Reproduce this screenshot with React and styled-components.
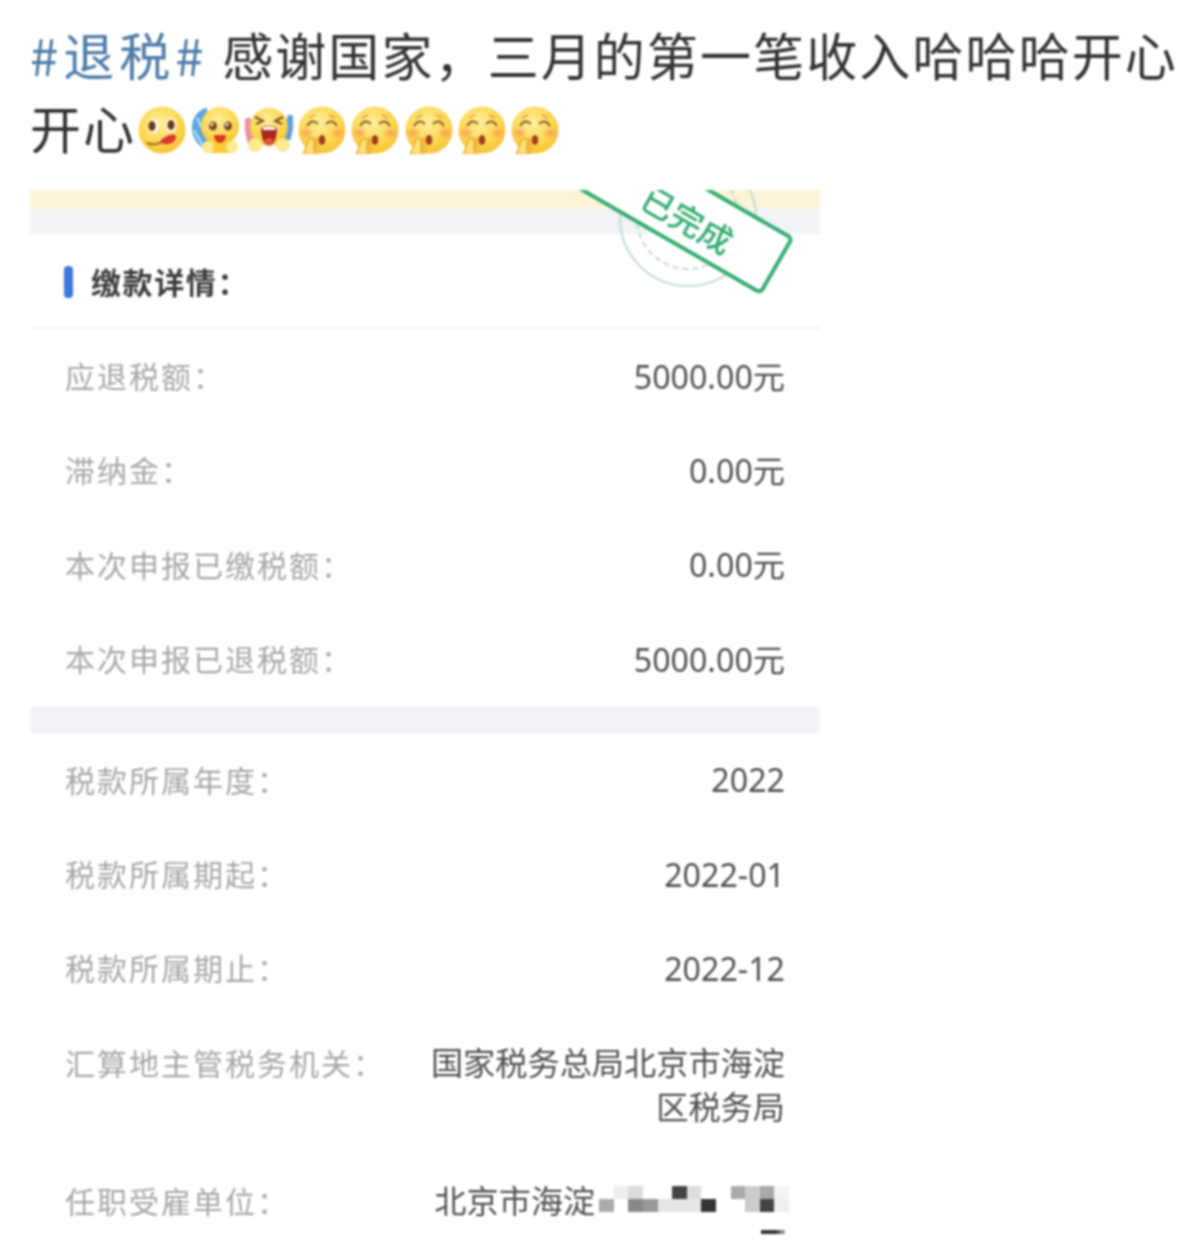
import React from "react";
import styled, { createGlobalStyle } from "styled-components";

const Global = createGlobalStyle`
  html, body { margin: 0; padding: 0; background: #fff; height: 1245px; overflow: hidden; }
`;

const Page = styled.div`
  width: 1200px;
  height: 1245px;
  overflow: hidden;
  background: #fff;
  font-family: "Noto Sans CJK SC", "Noto Sans", sans-serif;
  filter: blur(0.8px);
`;

const Headline = styled.div`
  padding: 18px 0 0 30px;
  font-size: 51px;
  line-height: 72.5px;
  letter-spacing: 2.1px;
  color: #333;
  margin-bottom: 27px;
`;

const Tag = styled.span`
  color: #4d7ca8;
  letter-spacing: 5px;
`;

const EmojiRow = styled.span`
  display: inline-flex;
  gap: 5.3px;
  vertical-align: -5px;
  margin-left: 2px;
`;

const Card = styled.div`
  position: relative;
  width: 790px;
  margin-left: 30px;
  overflow: hidden;
`;

const YellowBand = styled.div`
  height: 18px;
  background: #fbf4d6;
`;

const GrayBand = styled.div`
  height: ${(p) => p.$h}px;
  background: #f2f3f6;
`;

const SectionHeader = styled.div`
  height: 95px;
  box-sizing: border-box;
  border-bottom: 2px solid #f1f2f4;
  display: flex;
  align-items: center;
  gap: 18px;
  padding: 0 0 0 34px;
`;

const Bar = styled.span`
  width: 9px;
  height: 32px;
  border-radius: 4px;
  background: #3d78dc;
  margin-top: 2px;
`;

const SectionTitle = styled.span`
  font-size: 30px;
  font-weight: 700;
  letter-spacing: 1.6px;
  color: #3c3c3c;
`;

const Row = styled.div`
  display: flex;
  justify-content: space-between;
  align-items: flex-start;
  padding: ${(p) => (p.$multi ? "25px 35px 25px" : "25px 35px 27px")};
  font-size: 30px;
  line-height: 42.4px;
`;

const Label = styled.span`
  color: #a6a6a6;
  letter-spacing: 2px;
  font-weight: 400;
  white-space: nowrap;
`;

const Value = styled.span`
  color: #505050;
  max-width: 358px;
  text-align: right;
  font-family: "Noto Sans", "Noto Sans CJK SC", sans-serif;
  font-size: 32.2px;
  font-weight: 400;
  line-height: ${(p) => (p.$multi ? "44px" : "42.4px")};
  padding-top: ${(p) => (p.$multi ? "0" : "1.5px")};
  margin-bottom: ${(p) => (p.$multi ? "0" : "-1.5px")};
`;

const Mosaic = styled.span`
  display: inline-grid;
  grid-template-columns: repeat(13, 14.6px);
  grid-auto-rows: 13px;
  vertical-align: 14px;
  margin-left: 4px;
  margin-right: -4px;
`;

const Tile = styled.span`
  background: ${(p) => p.$c};
`;

const Scrap = styled.span`
  display: inline-block;
  width: 24px;
  height: 4px;
  background: linear-gradient(90deg, #333 60%, #aaa);
  vertical-align: 23px;
`;

const Ring = styled.div`
  position: absolute;
  left: 589px;
  top: -41px;
  width: 138px;
  height: 138px;
  box-sizing: border-box;
  border: 2px solid #bfdccf;
  border-radius: 50%;
  display: flex;
  align-items: center;
  justify-content: center;
`;

const InnerRing = styled.div`
  width: 104px;
  height: 104px;
  box-sizing: border-box;
  border: 2px dashed #c2dace;
  border-radius: 50%;
`;

const Stamp = styled.div`
  position: absolute;
  left: 524px;
  top: -17px;
  width: 240px;
  height: 67px;
  box-sizing: border-box;
  background: #fff;
  border: 4px solid #35ad72;
  border-radius: 6px;
  transform: rotate(30deg);
  display: flex;
  align-items: center;
  justify-content: center;
  padding: 8px 0 0 36px;
  color: #35ad72;
  font-size: 33px;
  font-weight: 500;
  line-height: 1;
  white-space: nowrap;
`;

const Face = ({ id, children, c1 = "#fff09a", c2 = "#f6bd2c" }) => (
  <>
    <defs>
      <radialGradient id={id} cx="45%" cy="35%" r="70%">
        <stop offset="0%" stopColor={c1} />
        <stop offset="65%" stopColor="#fbd54e" />
        <stop offset="100%" stopColor={c2} />
      </radialGradient>
    </defs>
    {children}
  </>
);

const Tongue = () => (
  <svg width="48" height="48" viewBox="0 0 48 48">
    <Face id="f1">
      <circle cx="24" cy="24" r="23.5" fill="url(#f1)" />
      <ellipse cx="15" cy="20" rx="5.4" ry="7" fill="#fff" />
      <ellipse cx="33" cy="19" rx="5.4" ry="7" fill="#fff" />
      <ellipse cx="14" cy="20" rx="3.6" ry="5" fill="#6b3a1c" />
      <ellipse cx="33" cy="19" rx="3.6" ry="5" fill="#6b3a1c" />
      <path d="M9 37 C17 40 26 37 31 30" stroke="#a8641c" strokeWidth="2" fill="none" />
      <path d="M22 36 C26 29 38 26 38 31 C38 37 28 41 22 36Z" fill="#d9392f" />
    </Face>
  </svg>
);

const Hug = () => (
  <svg width="48" height="48" viewBox="0 0 48 48">
    <Face id="f2">
      <path d="M0 24 C-1 10 8 3 15 2 L18 44 C9 44 1 34 0 24Z" fill="#5aa6e0" />
      <path d="M5 12 L14 30 M2 24 L11 40" stroke="#b5dcf5" strokeWidth="2.5" />
      <circle cx="28" cy="20" r="19" fill="url(#f2)" />
      <path d="M15 32 H41 L38 47 H20Z" fill="#f8cb37" />
      <ellipse cx="21" cy="20" rx="4" ry="4.6" fill="#7a4a24" />
      <ellipse cx="36" cy="20" rx="4" ry="4.6" fill="#7a4a24" />
      <circle cx="20" cy="18.5" r="1.4" fill="#fff" />
      <circle cx="35" cy="18.5" r="1.4" fill="#fff" />
      <path d="M22 29 H34 C34 35 30 37 28 37 C26 37 22 35 22 29Z" fill="#d8381f" />
      <circle cx="16" cy="41" r="6" fill="#fde98e" />
      <circle cx="40" cy="41" r="6" fill="#fde98e" />
    </Face>
  </svg>
);

const Scream = () => (
  <svg width="48" height="48" viewBox="0 0 48 48">
    <Face id="f3">
      <rect x="0" y="12" width="8" height="25" rx="2" fill="#f08fa5" transform="rotate(-10 4 24)" />
      <rect x="40" y="9" width="8" height="25" rx="2" fill="#5b9fe3" transform="rotate(12 44 22)" />
      <circle cx="24" cy="21" r="19" fill="url(#f3)" />
      <path d="M10 11 L18 15 L11 18 M38 11 L30 15 L37 18" stroke="#7a4a24" strokeWidth="2" fill="none" />
      <path d="M16 22 C20 19 28 19 32 22 C32 32 29 39 24 39 C19 39 16 32 16 22Z" fill="#a9261c" />
      <path d="M17 22 C21 20 27 20 31 22 L30 24 H18Z" fill="#fff" />
      <ellipse cx="24" cy="35" rx="4" ry="3" fill="#e8553f" />
      <circle cx="10" cy="39" r="7" fill="#fde98e" />
      <circle cx="38" cy="39" r="7" fill="#fde98e" />
    </Face>
  </svg>
);

const Shy = ({ id }) => (
  <svg width="48" height="48" viewBox="0 0 48 48">
    <Face id={id}>
      <defs>
        <radialGradient id={`${id}b`}>
          <stop offset="0%" stopColor="#f98a55" stopOpacity="0.75" />
          <stop offset="100%" stopColor="#f98a55" stopOpacity="0" />
        </radialGradient>
      </defs>
      <circle cx="24" cy="24" r="23.5" fill={`url(#${id})`} />
      <ellipse cx="8" cy="27" rx="8" ry="6" fill={`url(#${id}b)`} />
      <ellipse cx="40" cy="27" rx="8" ry="6" fill={`url(#${id}b)`} />
      <path d="M9 20 Q14 12 20 18 M28 18 Q34 12 39 20" stroke="#8a5a24" strokeWidth="2" fill="none" />
      <path d="M11 12 L17 9 M31 9 L37 12" stroke="#e0a030" strokeWidth="1.5" />
      <ellipse cx="24" cy="34" rx="3.2" ry="5" fill="#9c3a1c" />
      <path d="M5 48 C9 44 8 32 14 32 C19 33 14 42 17 47 C19 42 16 34 19 32 C20 38 22 44 19 48Z" fill="#fde27a" stroke="#eda92a" strokeWidth="1.5" />
    </Face>
  </svg>
);

const mosaicTiles = [
  "transparent", "#eee", "#dcdcdc", "transparent", "transparent", "#444", "#ddd", "transparent", "transparent", "#aaa", "#ccc", "#aaa", "#f3f3f3",
  "#aaa", "transparent", "#888", "#999", "#e6e6e6", "#e6e6e6", "#e6e6e6", "#333", "transparent", "transparent", "#ccc", "#444", "#eee",
];

const rowsA = [
  ["应退税额：", "5000.00元"],
  ["滞纳金：", "0.00元"],
  ["本次申报已缴税额：", "0.00元"],
  ["本次申报已退税额：", "5000.00元"],
];

const rowsB = [
  ["税款所属年度：", "2022"],
  ["税款所属期起：", "2022-01"],
  ["税款所属期止：", "2022-12"],
];

export default function App() {
  return (
    <Page>
      <Global />
      <Headline>
        <Tag>#退税#</Tag> 感谢国家，三月的第一笔收入哈哈哈开心开心
        <EmojiRow>
          <Tongue />
          <Hug />
          <Scream />
          <Shy id="s1" />
          <Shy id="s2" />
          <Shy id="s3" />
          <Shy id="s4" />
          <Shy id="s5" />
        </EmojiRow>
      </Headline>
      <Card>
        <YellowBand />
        <GrayBand $h={26} />
        <SectionHeader>
          <Bar />
          <SectionTitle>缴款详情：</SectionTitle>
        </SectionHeader>
        {rowsA.map(([l, v]) => (
          <Row key={l}>
            <Label>{l}</Label>
            <Value>{v}</Value>
          </Row>
        ))}
        <GrayBand $h={26} />
        {rowsB.map(([l, v]) => (
          <Row key={l}>
            <Label>{l}</Label>
            <Value>{v}</Value>
          </Row>
        ))}
        <Row $multi>
          <Label>汇算地主管税务机关：</Label>
          <Value $multi>国家税务总局北京市海淀区税务局</Value>
        </Row>
        <Row $multi>
          <Label>任职受雇单位：</Label>
          <Value $multi>
            北京市海淀
            <Mosaic>
              {mosaicTiles.map((c, i) => (
                <Tile key={i} $c={c} />
              ))}
            </Mosaic>
            <br />
            <Scrap />
          </Value>
        </Row>
        <Ring>
          <InnerRing />
        </Ring>
        <Stamp>已完成</Stamp>
      </Card>
    </Page>
  );
}
